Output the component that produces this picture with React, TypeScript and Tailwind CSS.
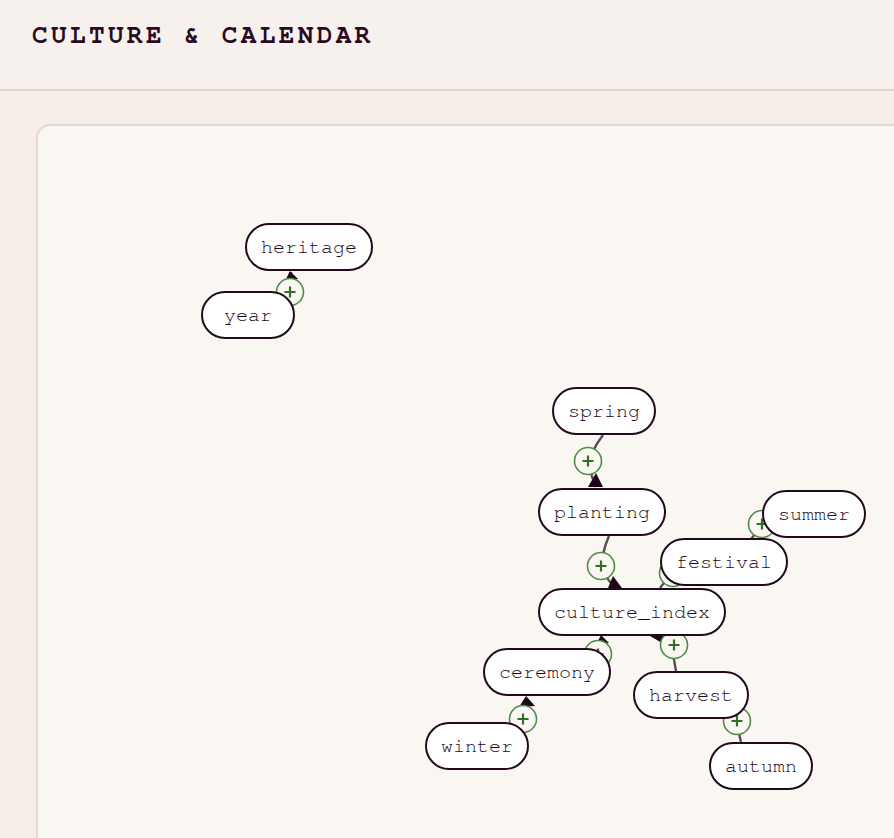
import React from 'react';

type GraphNode = { id: string; x: number; y: number };

// canvas origin sits at the inner corner of the card
const OX = 38;
const OY = 126;

const NODES: GraphNode[] = [
  { id: 'heritage', x: 245, y: 223 },
  { id: 'year', x: 201, y: 291 },
  { id: 'spring', x: 552, y: 387 },
  { id: 'planting', x: 538, y: 488 },
  { id: 'summer', x: 762, y: 490 },
  { id: 'festival', x: 660, y: 538 },
  { id: 'culture_index', x: 538, y: 588 },
  { id: 'ceremony', x: 483, y: 648 },
  { id: 'harvest', x: 633, y: 671 },
  { id: 'winter', x: 425, y: 722 },
  { id: 'autumn', x: 709, y: 742 },
];

const LINKS = [
  'M285 291 Q290 284 291 272',
  'M603 435 Q590 452 589 466 Q592 478 596 487',
  'M609 536 Q601 554 602 570 Q608 580 614 587',
  'M676 671 Q673 657 672 642 L660 638',
  'M741 742 Q738 731 736 718',
  'M590 648 Q600 645 602 638',
  'M515 722 Q523 712 527 700',
  'M764 515 Q760 530 750 540',
  'M670 560 Q672 575 660 588',
];

const ARROWS = [
  '290,271 285,281 298,279',
  '596,473 588,487 603,487',
  '613,576 608,588 622,588',
  '650,636 666,636 662,643',
  '601,635 596,645 609,643',
  '526,696 519,707 535,706',
];

const JOINTS: [number, number][] = [
  [290, 292],
  [588, 461],
  [601, 566],
  [673, 573],
  [762, 524],
  [598, 654],
  [674, 645],
  [523, 719],
  [737, 721],
];

const Joint = ({ cx, cy }: { cx: number; cy: number }) => (
  <g>
    <circle cx={cx} cy={cy} r={13.5} fill="#faf7f3" stroke="#4f8d45" strokeWidth={1.6} />
    <path d={`M${cx - 5.5} ${cy}H${cx + 5.5}M${cx} ${cy - 5.5}V${cy + 5.5}`} stroke="#2f6f27" strokeWidth={2.2} />
  </g>
);

const Node = ({ node }: { node: GraphNode }) => (
  <div
    className="absolute min-w-[94px] rounded-full border-2 border-[#24091d] bg-white px-[14px] py-[10px] text-center font-['FreeMono','Courier_New',monospace] text-[20px] leading-[24px] text-[#1c0817] whitespace-nowrap"
    style={{ left: node.x - OX, top: node.y - OY }}
  >
    {node.id}
  </div>
);

export default function App() {
  return (
    <div className="h-[838px] w-[894px] overflow-hidden bg-[#f7eee7]">
      <header className="h-[91px] border-b-2 border-[#dbd1ce] bg-[#f6f1ec] px-8 pt-[19px]">
        <h1 className="font-['FreeMono','Courier_New',monospace] text-[26px] font-bold leading-[32px] tracking-[0.13em] text-[#2a0a22]">
          CULTURE &amp; CALENDAR
        </h1>
      </header>

      <div className="ml-[36px] mt-[33px] h-[760px] w-[920px] rounded-[14px] border-2 border-[#e2dad7] bg-[#faf7f3]">
        <div className="relative h-full w-full">
          <svg className="absolute inset-0 h-full w-full" aria-hidden>
            <g transform={`translate(${-OX} ${-OY})`}>
              {LINKS.map((d, i) => (
                <path key={i} d={d} fill="none" stroke="#5b4a57" strokeWidth={2.4} />
              ))}
              {ARROWS.map((p, i) => (
                <polygon key={i} points={p} fill="#1e0718" />
              ))}
              {JOINTS.map(([cx, cy], i) => (
                <Joint key={i} cx={cx} cy={cy} />
              ))}
            </g>
          </svg>
          {NODES.map((n) => (
            <Node key={n.id} node={n} />
          ))}
        </div>
      </div>
    </div>
  );
}
